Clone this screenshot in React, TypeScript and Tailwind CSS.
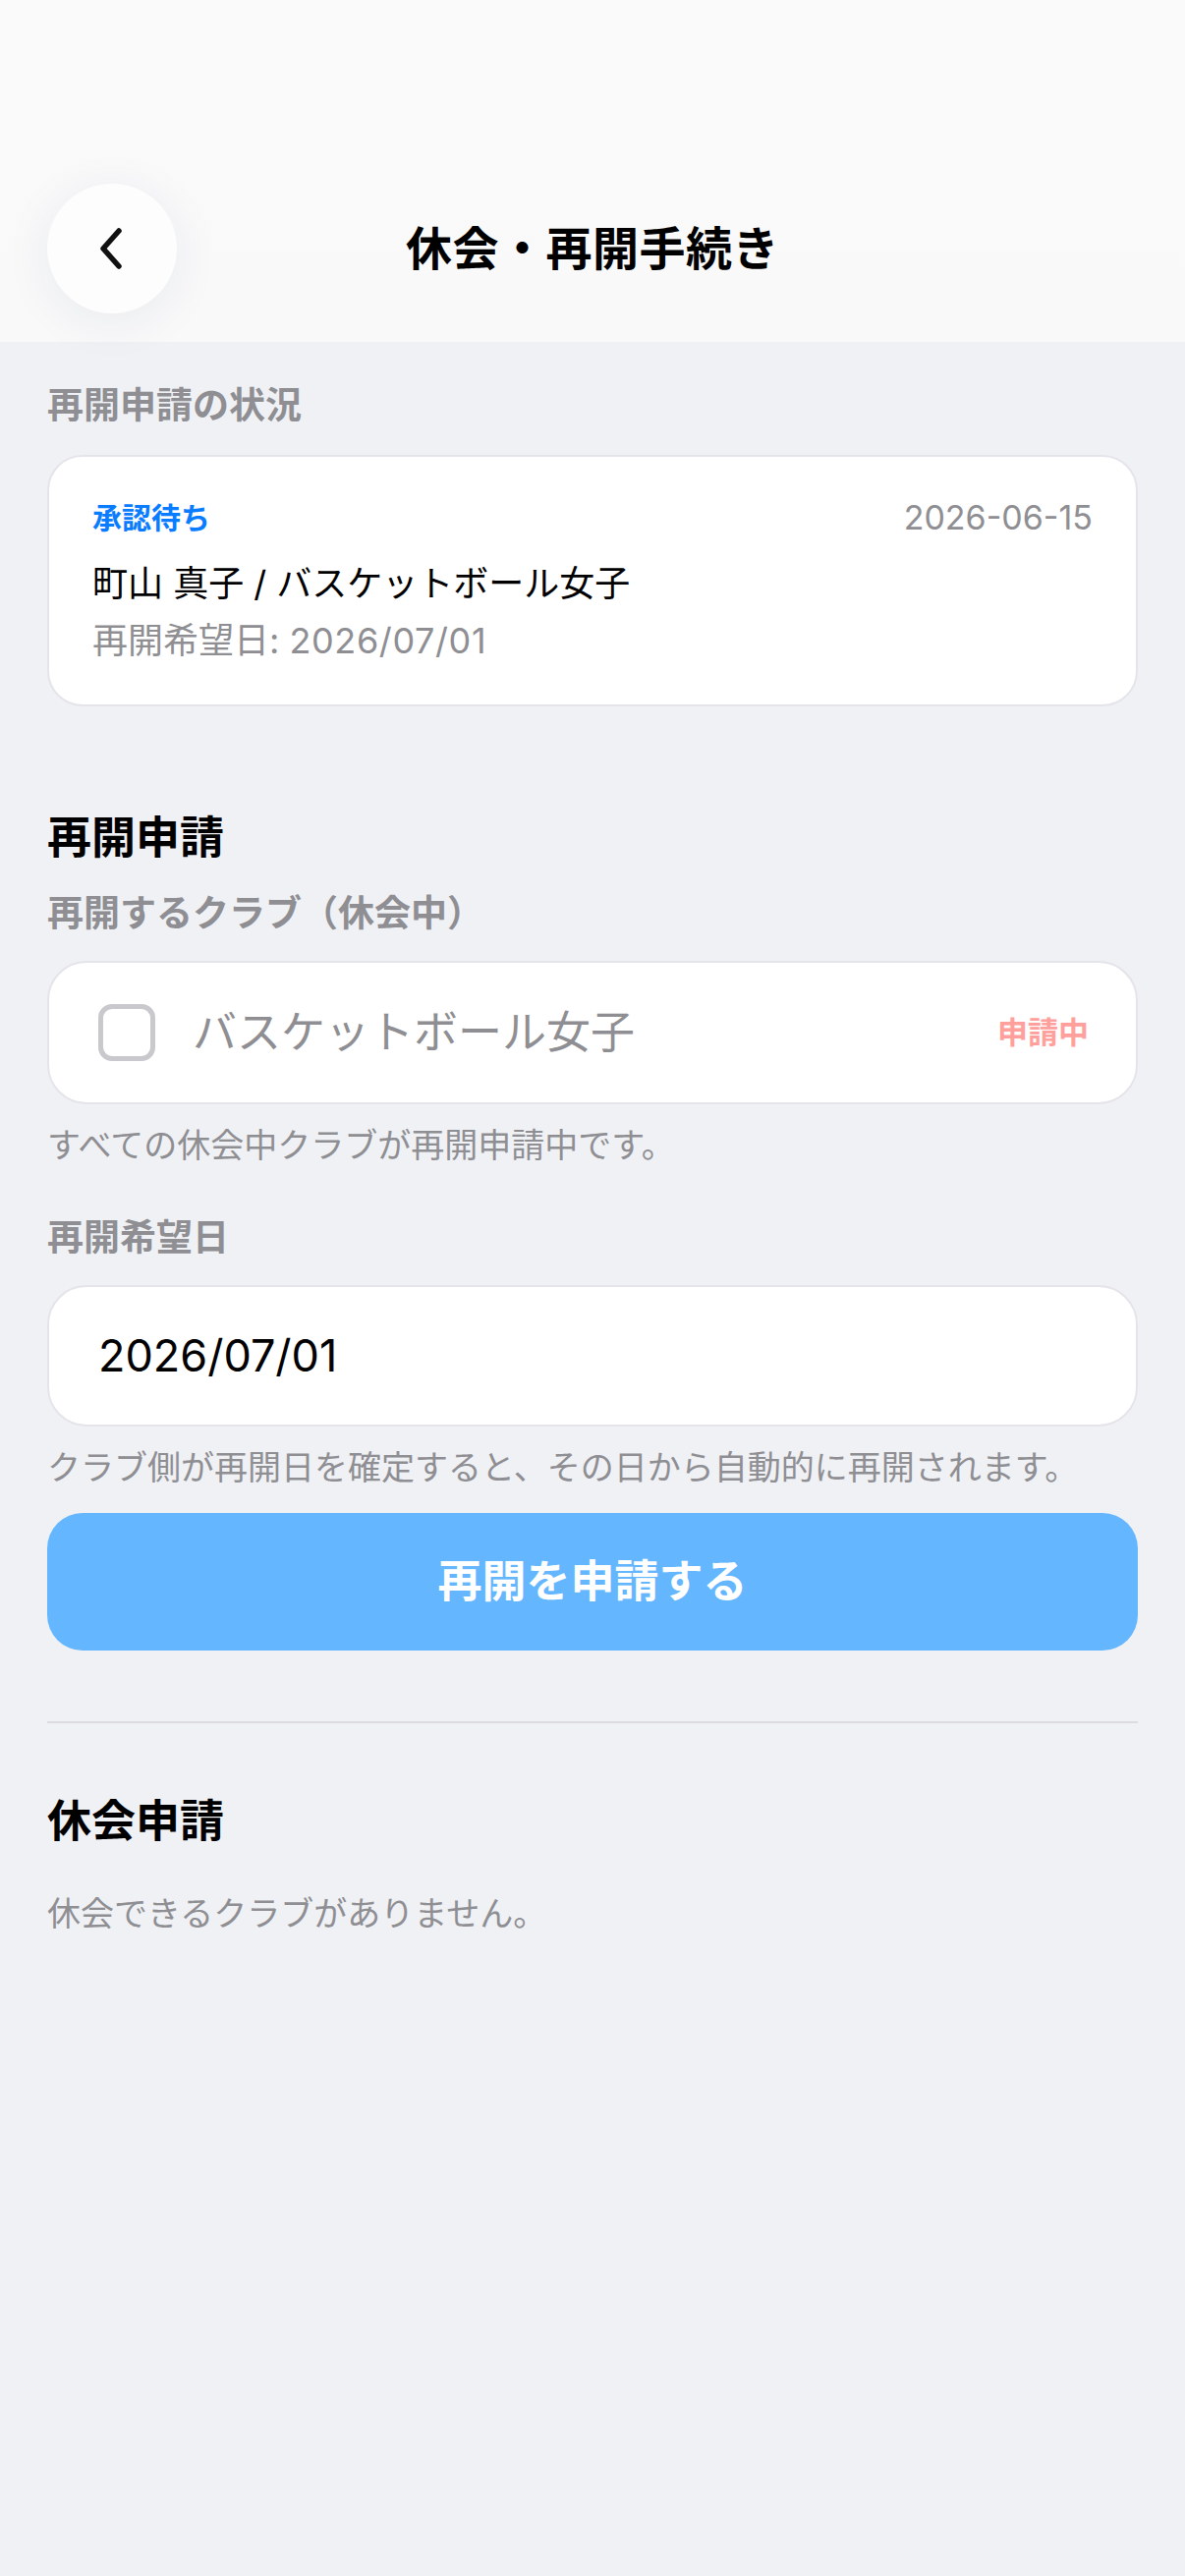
const font = {
  fontFamily: 'Inter, "Noto Sans CJK JP", "Noto Sans", sans-serif',
};

function BackButton() {
  return (
    <button className="flex h-[132px] w-[132px] items-center justify-center rounded-full bg-[#fdfdfd] shadow-[0_8px_50px_rgba(30,40,80,0.07)]">
      <svg width="40" height="48" viewBox="0 0 40 48" fill="none">
        <path
          d="M27 6 L11 24 L27 42"
          stroke="#111"
          strokeWidth="5.5"
          strokeLinecap="round"
          strokeLinejoin="round"
        />
      </svg>
    </button>
  );
}

function Label({ children }: { children: React.ReactNode }) {
  return (
    <p className="text-[37px] font-bold leading-[48px] text-[#8e8e93]">{children}</p>
  );
}

function Hint({ children }: { children: React.ReactNode }) {
  return <p className="text-[34px] leading-[44px] text-[#8e8e93]">{children}</p>;
}

export default function App() {
  return (
    <div className="min-h-screen bg-[#f0f1f5]" style={font}>
      <header className="flex h-[348px] items-start bg-gradient-to-b from-[#fafafb] to-[#f9f9fa] px-[48px] pt-[187px]">
        <div className="w-[132px]">
          <BackButton />
        </div>
        <h1 className="flex h-[132px] flex-1 items-center justify-center text-[47px] font-bold tracking-[0.5px] text-black">
          休会・再開手続き
        </h1>
        <div className="w-[132px]" />
      </header>

      <main className="flex flex-col px-[48px] pt-[41px] pb-[200px]">
        <Label>再開申請の状況</Label>

        <div className="mt-[26px] flex flex-col rounded-[36px] border-2 border-[#e4e4ea] bg-white px-[44px] pt-[42px] pb-[42px]">
          <div className="flex items-center justify-between">
            <span className="text-[30px] font-bold leading-[40px] text-[#0a7cff]">承認待ち</span>
            <span className="text-[34px] leading-[40px] text-[#8e8e93]">2026-06-15</span>
          </div>
          <p className="mt-[24px] text-[36px] leading-[46px] text-black">
            町山 真子 / バスケットボール女子
          </p>
          <p className="mt-[12px] text-[36px] leading-[46px] text-[#8e8e93]">
            再開希望日: <span className="tracking-[0.6px]">2026/07/01</span>
          </p>
        </div>

        <h2 className="mt-[106px] text-[45px] font-bold leading-[56px] text-black">再開申請</h2>
        <div className="mt-[25px]">
          <Label>再開するクラブ（休会中）</Label>
        </div>

        <div className="mt-[24px] flex h-[146px] items-center rounded-[40px] border-2 border-[#e4e4ea] bg-white pl-[50px] pr-[48px]">
          <span className="h-[58px] w-[58px] shrink-0 rounded-[14px] border-[5px] border-[#c8c8cd]" />
          <span className="ml-[38px] flex-1 text-[45px] leading-[56px] text-[#8e8e93]">
            バスケットボール女子
          </span>
          <span className="text-[31px] font-bold leading-[40px] text-[#ffa09c]">申請中</span>
        </div>

        <div className="mt-[20px]">
          <Hint>すべての休会中クラブが再開申請中です。</Hint>
        </div>

        <div className="mt-[48px]">
          <Label>再開希望日</Label>
        </div>

        <div className="mt-[24px] flex h-[144px] items-center rounded-[40px] border-2 border-[#e4e4ea] bg-white px-[50px]">
          <span className="text-[45px] leading-[56px] text-black">2026/07/01</span>
        </div>

        <div className="mt-[20px]">
          <Hint>クラブ側が再開日を確定すると、その日から自動的に再開されます。</Hint>
        </div>

        <button className="mt-[24px] flex h-[140px] items-center justify-center rounded-[36px] bg-[#64b6ff] text-[45px] font-bold text-white">
          再開を申請する
        </button>

        <div className="mt-[72px] h-[2px] bg-[#dcdce0]" />

        <h2 className="mt-[72px] text-[45px] font-bold leading-[56px] text-black">休会申請</h2>
        <div className="mt-[44px]">
          <Hint>休会できるクラブがありません。</Hint>
        </div>
      </main>
    </div>
  );
}
